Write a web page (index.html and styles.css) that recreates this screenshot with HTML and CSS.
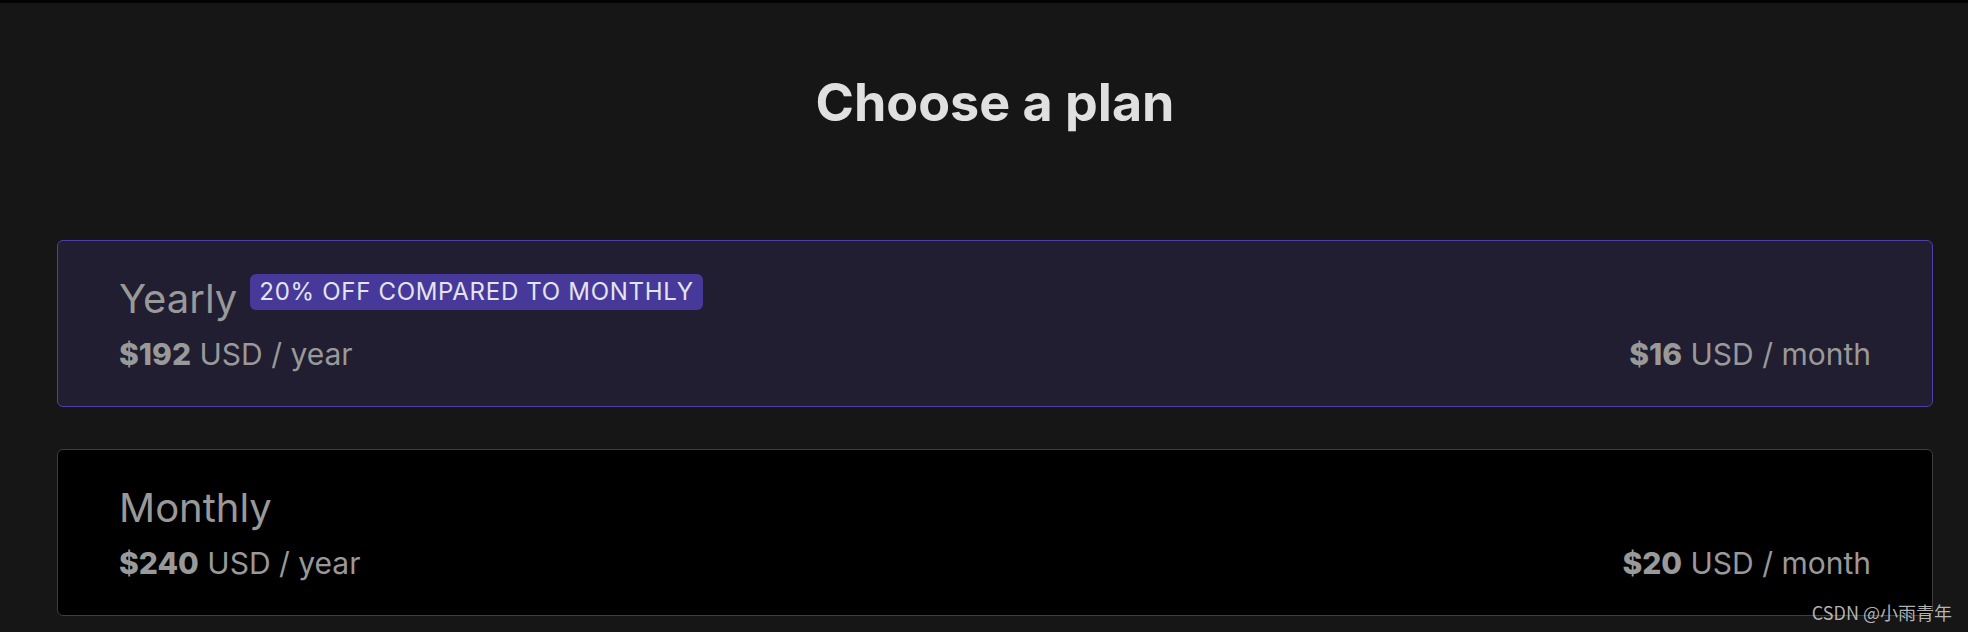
FILE: index.html
```html
<!DOCTYPE html>
<html lang="en">
<head>
<meta charset="utf-8">
<title>Choose a plan</title>
<link rel="stylesheet" href="styles.css">
</head>
<body>
<div class="topbar"></div>
<main class="page">
  <h1 class="title">Choose a plan</h1>
  <div class="plans">
    <div class="plan plan-selected">
      <div class="plan-head">
        <span class="plan-name">Yearly</span>
        <span class="badge">20% OFF COMPARED TO MONTHLY</span>
      </div>
      <div class="plan-prices">
        <span class="price"><b>$192</b> USD / year</span>
        <span class="price"><b>$16</b> USD / month</span>
      </div>
    </div>
    <div class="plan">
      <div class="plan-head">
        <span class="plan-name">Monthly</span>
      </div>
      <div class="plan-prices">
        <span class="price"><b>$240</b> USD / year</span>
        <span class="price"><b>$20</b> USD / month</span>
      </div>
    </div>
  </div>
</main>
<div class="watermark">CSDN @小雨青年</div>
</body>
</html>
```

FILE: styles.css
```css
html, body {
  margin: 0;
  padding: 0;
  background: #161616;
  height: 100%;
  overflow: hidden;
}
body {
  font-family: Inter, "Noto Sans", sans-serif;
  position: relative;
}
.topbar {
  height: 3px;
  background: #030303;
}
.page {
  padding: 0 35px 0 57px;
}
.title {
  margin: 0;
  padding-top: 67px;
  height: 174px;
  box-sizing: border-box;
  text-align: center;
  font-size: 52px;
  line-height: 66px;
  font-weight: 700;
  color: #e0e0e0;
}
.plans {
  display: flex;
  flex-direction: column;
  gap: 42px;
  margin-top: 63px;
}
.plan {
  border: 1px solid #3e3e3e;
  background: #000;
  border-radius: 6px;
  padding: 34px 61px 32px 61px;
}
.plan-selected {
  border-color: #4e3fab;
  background: #201e30;
}
.plan-head {
  display: flex;
  align-items: flex-start;
  gap: 13px;
  height: 48px;
}
.plan-name {
  font-size: 40px;
  line-height: 48px;
  color: #999;
}
.badge {
  background: #46399a;
  color: #e4e4ee;
  font-size: 24px;
  line-height: 36px;
  letter-spacing: 0.7px;
  padding: 0 9px;
  border-radius: 6px;
  margin-top: -1px;
}
.plan-prices {
  display: flex;
  justify-content: space-between;
  margin-top: 11px;
}
.price {
  font-size: 30px;
  line-height: 40px;
  color: #999;
}
.price b {
  font-weight: 800;
}
.watermark {
  position: absolute;
  right: 16px;
  bottom: 8px;
  font-family: "Noto Sans CJK SC", "Noto Sans", sans-serif;
  font-size: 18px;
  line-height: 24px;
  color: rgba(210, 210, 210, 0.85);
}
```
